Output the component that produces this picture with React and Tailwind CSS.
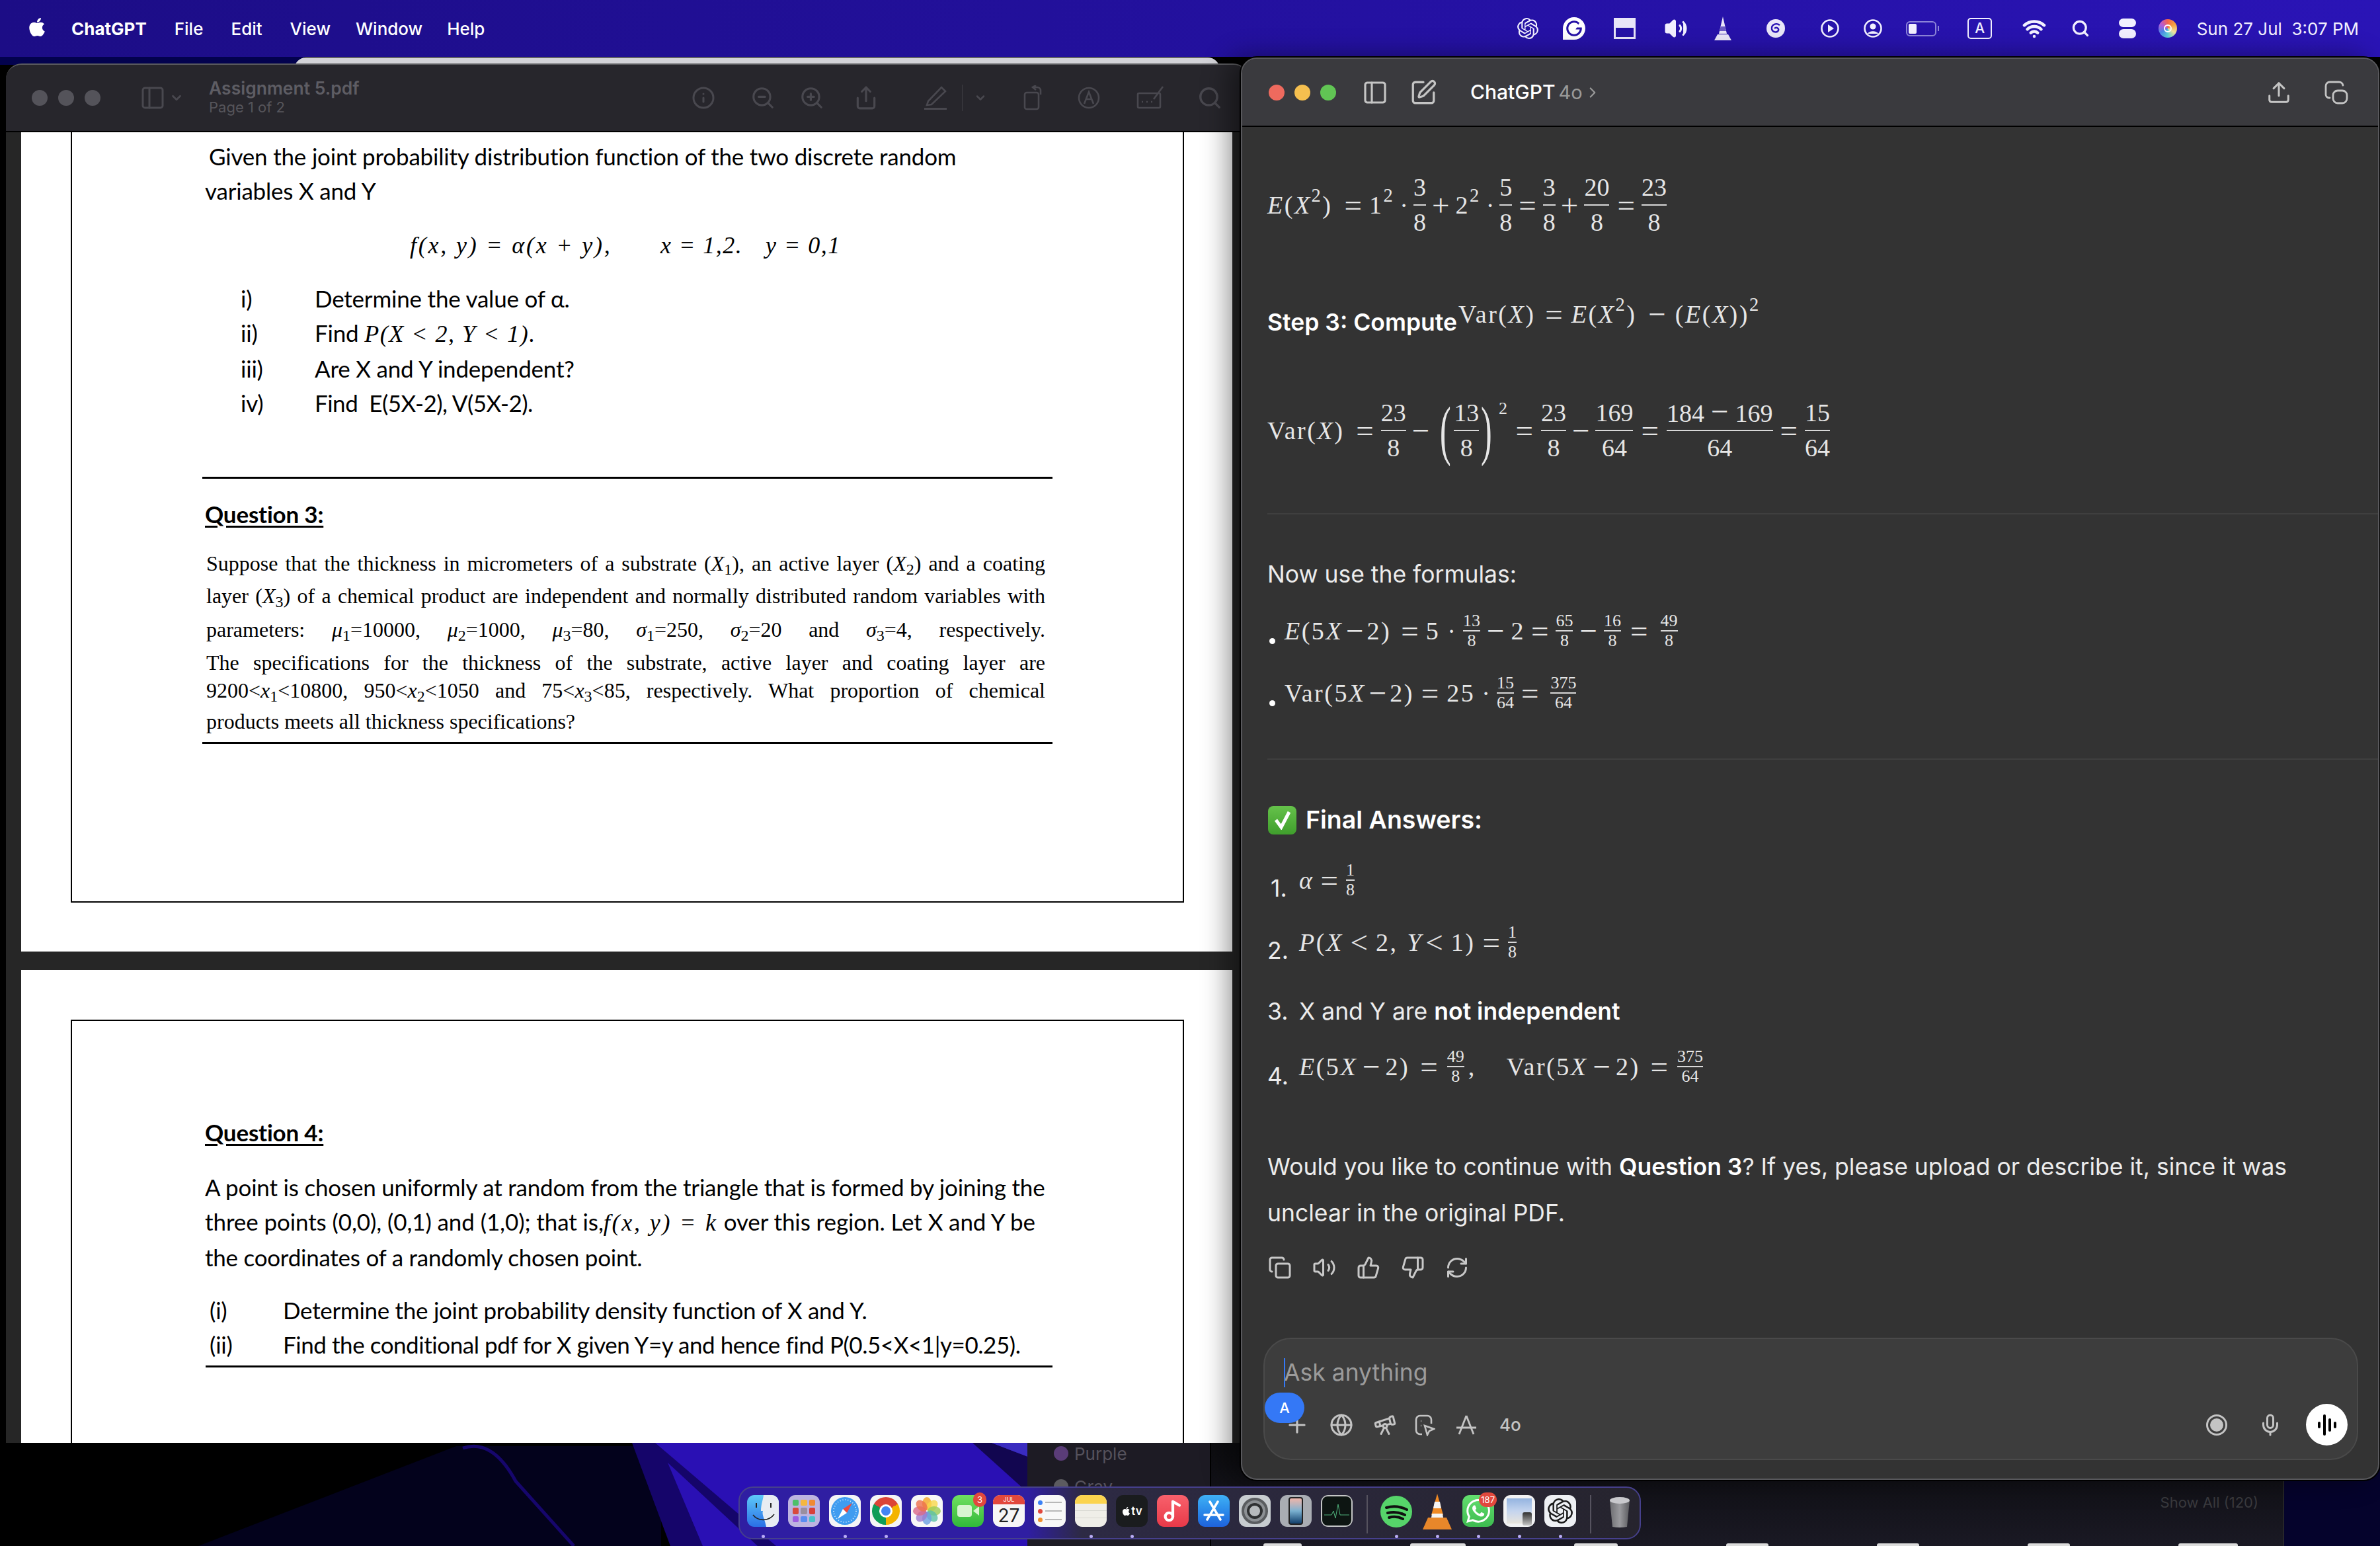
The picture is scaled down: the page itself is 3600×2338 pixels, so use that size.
import {
  Info, ZoomOut, ZoomIn, Share, ChevronDown, ChevronRight, Search, Copy, ThumbsUp, ThumbsDown, RefreshCw,
  Volume2, Plus, Globe, Telescope, Mic, PanelLeft, SquarePen, Upload, Wifi, Music2,
} from "lucide-react";
import { FaApple } from "react-icons/fa";
import { SiOpenai, SiWhatsapp, SiGrammarly } from "react-icons/si";

// --- math helpers ---
const Frac = ({ n, d }) => (
  <span className="inline-flex flex-col items-center tracking-normal">
    <span className="h-[51px] leading-[51px]">{n}</span>
    <span className="h-[2px] w-full bg-[#d8d8d8]" />
    <span className="h-[51px] leading-[51px]">{d}</span>
  </span>
);

const SmallFrac = ({ n, d }) => (
  <span className="inline-flex flex-col items-center text-[26px] tracking-normal">
    <span className="h-[28px] leading-[28px]">{n}</span>
    <span className="h-[2px] w-full bg-[#d8d8d8]" />
    <span className="h-[28px] leading-[28px]">{d}</span>
  </span>
);

// operators in the reference's math font run wider than Liberation Serif
const Sym = ({ m = "mx-[10px]", children }) => <span className={`text-[47px] leading-none font-light tracking-normal ${m}`}>{children}</span>;
const Dot = ({ m = "mx-[8px]" }) => <span className={`tracking-normal ${m}`}>·</span>;

const MathRow = ({ className = "", children }) => (
  <div className={`flex items-center whitespace-pre font-['Liberation_Serif',serif] text-[38px] tracking-[2.5px] text-[#e6e6e6] ${className}`}>
    {children}
  </div>
);

// --- menu bar glyphs ---
const VlcGlyph = () => (
  <svg width="28" height="36" viewBox="0 0 28 36" className="shrink-0">
    <path d="M14 0 L20 26 H8 Z" fill="#e9e6f8" />
    <path d="M10.5 15 H17.5 L19 22 H9 Z" fill="#6a5ac4" />
    <path d="M6 27 H22 L27 36 H1 Z" fill="#e9e6f8" />
  </svg>
);

const SwirlGlyph = () => (
  <svg width="30" height="30" viewBox="0 0 30 30" className="shrink-0">
    <circle cx="15" cy="15" r="14" fill="#e9e6f8" />
    <path d="M21 10c-5-4-13-1-12 6 1 5 8 6 10 2 1-3-3-6-6-3" fill="none" stroke="#2a14b4" strokeWidth="2.4" />
  </svg>
);

const RingGlyph = ({ children }) => (
  <svg width="30" height="30" viewBox="0 0 30 30" className="shrink-0">
    <circle cx="15" cy="15" r="12.5" fill="none" stroke="#f2f0ff" strokeWidth="2.6" />
    {children}
  </svg>
);

const Slot = ({ m, children }) => <span className={`w-0 flex justify-center ${m}`}>{children}</span>;

const MenuIcons = () => (
  <div className="flex items-center text-[#f2f0ff]">
    <Slot m="ml-[0px]"><SiOpenai size={32} className="shrink-0" /></Slot>
    <Slot m="ml-[70px]"><SiGrammarly size={34} color="#fff" className="shrink-0" /></Slot>
    <Slot m="ml-[77px]">
      <span className="w-[33px] h-[32px] shrink-0 border-[3px] border-[#e9e6f8] flex flex-col">
        <span className="h-[12px] bg-[#e9e6f8]" />
      </span>
    </Slot>
    <Slot m="ml-[77px]"><Volume2 size={36} fill="#f2f0ff" className="shrink-0" /></Slot>
    <Slot m="ml-[71px]"><VlcGlyph /></Slot>
    <Slot m="ml-[80px]"><SwirlGlyph /></Slot>
    <Slot m="ml-[82px]">
      <RingGlyph><path d="M12 9 L21 15 L12 21 Z" fill="#f2f0ff" /></RingGlyph>
    </Slot>
    <Slot m="ml-[65px]">
      <RingGlyph>
        <circle cx="15" cy="12" r="4.5" fill="#f2f0ff" />
        <path d="M7 23c2-5 14-5 16 0" fill="#f2f0ff" />
      </RingGlyph>
    </Slot>
    <Slot m="ml-[75px]">
      <span className="flex items-center shrink-0">
        <span className="w-[46px] h-[23px] rounded-[6px] border-[2px] border-[#8c84d8] p-[2px]">
          <span className="block h-full w-[12px] rounded-[2px] bg-[#f2f0ff]" />
        </span>
        <span className="w-[2px] h-[8px] ml-[2px] bg-[#8c84d8]" />
      </span>
    </Slot>
    <Slot m="ml-[87px]">
      <span className="w-[37px] h-[32px] shrink-0 border-[2.5px] border-[#f2f0ff] rounded-[5px] flex items-center justify-center font-['Inter',sans-serif] text-[21px] font-medium">A</span>
    </Slot>
    <Slot m="ml-[82px]"><Wifi size={36} strokeWidth={3} className="shrink-0" /></Slot>
    <Slot m="ml-[70px]"><Search size={28} strokeWidth={2.8} className="shrink-0" /></Slot>
    <Slot m="ml-[71px]">
      <span className="flex flex-col gap-[3px] shrink-0">
        <span className="w-[26px] h-[13px] rounded-full border-[2px] border-[#f2f0ff] bg-[#f2f0ff]" />
        <span className="w-[26px] h-[14px] rounded-full bg-[#f2f0ff]" />
      </span>
    </Slot>
    <Slot m="ml-[61px]">
      <span className="w-[28px] h-[28px] shrink-0 rounded-full bg-[conic-gradient(#f6644c,#f4a340,#f4e3a0,#5ad0d8,#4b86e8,#b45ad8,#f6644c)] flex items-center justify-center">
        <span className="w-[12px] h-[12px] rounded-full border-[2px] border-white" />
      </span>
    </Slot>
  </div>
);

// --- dock icons ---
const Tile = ({ className = "", children }) => (
  <div className={`w-[48px] h-[48px] rounded-[11px] overflow-hidden ${className}`}>{children}</div>
);

const Finder = () => (
  <svg width="48" height="48" viewBox="0 0 48 48" className="rounded-[11px]">
    <defs>
      <linearGradient id="fb" x1="0" y1="0" x2="0" y2="1">
        <stop offset="0" stopColor="#5ec9f8" />
        <stop offset="1" stopColor="#2a6fe6" />
      </linearGradient>
    </defs>
    <rect width="48" height="48" fill="url(#fb)" />
    <path d="M25 0 H48 V48 H29 C27 36 22 30 24 24 H21 C21 14 24 8 25 0Z" fill="#e8ecf2" />
    <path d="M14 12v7M36 12v7" stroke="#222" strokeWidth="2" />
    <path d="M9 30c8 10 24 10 32-1" stroke="#222" strokeWidth="1.6" fill="none" />
  </svg>
);

const Launchpad = () => {
  const colors = ["#4ec06a", "#f5b740", "#f08a34", "#d84a3c", "#9a8fa0", "#d8403a", "#9b5ce0", "#5a8cf0", "#4ac0c8"];
  return (
    <Tile className="bg-[#bdb4e0] grid grid-cols-3 gap-[3px] p-[7px]">
      {colors.map((c) => (
        <span key={c} className="rounded-[2px]" style={{ background: c }} />
      ))}
    </Tile>
  );
};

const Safari = () => (
  <Tile className="bg-[#f4f4f6] flex items-center justify-center">
    <svg width="44" height="44" viewBox="0 0 44 44">
      <circle cx="22" cy="22" r="21" fill="#3f9cf0" />
      <circle cx="22" cy="22" r="17" fill="none" stroke="#d4ebfb" strokeWidth="2" strokeDasharray="1 3" />
      <path d="M33 10 L25 25 L19 19 Z" fill="#f04a3c" />
      <path d="M11 34 L19 19 L25 25 Z" fill="#fff" />
    </svg>
  </Tile>
);

const Chrome = () => (
  <Tile className="bg-[#f4f4f6] flex items-center justify-center">
    <span className="w-[42px] h-[42px] rounded-full bg-[conic-gradient(from_300deg,#dc4437_0_120deg,#f4b400_120deg_240deg,#0f9d58_240deg_360deg)] flex items-center justify-center">
      <span className="w-[20px] h-[20px] rounded-full bg-[#4285f4] border-[3px] border-white" />
    </span>
  </Tile>
);

const Photos = () => (
  <Tile className="bg-[#f7f7f7]">
    <svg width="48" height="48" viewBox="0 0 48 48">
      {[["#f5a623", 0], ["#f7d74a", 45], ["#9acb55", 90], ["#5cc1a6", 135], ["#6c9fe0", 180], ["#9c7bd0", 225], ["#d9688a", 270], ["#ee6f4c", 315]].map(([c, a]) => (
        <ellipse key={a} cx="24" cy="13" rx="7" ry="10" fill={c} opacity="0.8" transform={`rotate(${a} 24 24)`} />
      ))}
    </svg>
  </Tile>
);

const FaceTime = () => (
  <Tile className="bg-gradient-to-b from-[#6fe060] to-[#2fb93a] flex items-center justify-center gap-[2px]">
    <span className="w-[22px] h-[18px] rounded-[4px] bg-[#d8f5d0]" />
    <span className="w-0 h-0 border-y-[7px] border-y-transparent border-r-[9px] border-r-[#d8f5d0]" />
  </Tile>
);

const Calendar = () => (
  <Tile className="bg-[#f6f6f6] flex flex-col items-center font-['Inter',sans-serif]">
    <span className="w-full h-[14px] bg-[#e2483d] text-white text-[9px] leading-[14px] text-center">JUL</span>
    <span className="text-[#222] text-[28px] leading-[34px]">27</span>
  </Tile>
);

const Reminders = () => (
  <Tile className="bg-[#f8f8f8] flex flex-col justify-center gap-[6px] px-[6px]">
    {["#3b82f6", "#e2483d", "#f0902f"].map((c) => (
      <span key={c} className="flex items-center gap-[4px]">
        <span className="w-[7px] h-[7px] rounded-full" style={{ background: c }} />
        <span className="flex-1 h-[2px] bg-[#b8b8b8]" />
      </span>
    ))}
  </Tile>
);

const Notes = () => (
  <Tile className="bg-[#efeee8] flex flex-col">
    <span className="h-[13px] bg-[#fbd44e]" />
    <span className="h-[1px] mt-[10px] bg-[#d8d8d2]" />
    <span className="h-[1px] mt-[10px] bg-[#d8d8d2]" />
  </Tile>
);

const Tv = () => (
  <Tile className="bg-[#1a1c1e] flex items-center justify-center text-white">
    <FaApple size={15} />
    <span className="font-['Inter',sans-serif] text-[17px] font-semibold leading-none">tv</span>
  </Tile>
);

const MusicApp = () => (
  <Tile className="bg-gradient-to-b from-[#f8606c] to-[#e83848] flex items-center justify-center">
    <Music2 size={34} color="#fff" strokeWidth={3} />
  </Tile>
);

const AppStore = () => (
  <Tile className="bg-gradient-to-b from-[#3fb0f5] to-[#1f62dc]">
    <svg width="48" height="48" viewBox="0 0 48 48" stroke="#fff" strokeWidth="3.5" strokeLinecap="round">
      <path d="M18 10 L34 37M30 10 L14 37M10 30 H38" />
    </svg>
  </Tile>
);

const SettingsApp = () => (
  <Tile className="bg-[#c7ccd0] flex items-center justify-center">
    <span className="w-[40px] h-[40px] rounded-full border-[4px] border-[#5a5d60] flex items-center justify-center bg-[#8c9094]">
      <span className="w-[24px] h-[24px] rounded-full border-[4px] border-[#2e3032] bg-[#b6babd]" />
    </span>
  </Tile>
);

const Mirroring = () => (
  <Tile className="bg-[#a9adb3] flex items-center justify-center">
    <span className="w-[22px] h-[42px] rounded-[4px] border-[2px] border-[#222] bg-gradient-to-b from-[#eeb4a8] via-[#7ab0d0] to-[#11406c]" />
  </Tile>
);

const Activity = () => (
  <Tile className="bg-[#c4c6c6] p-[2px]">
    <span className="block w-full h-full rounded-[8px] bg-[#0d1512]">
      <svg width="44" height="44" viewBox="0 0 44 44">
        <path d="M3 28 H14 L17 22 L20 33 L24 12 L27 28 H41" fill="none" stroke="#4fb07a" strokeWidth="1" />
      </svg>
    </span>
  </Tile>
);

const Spotify = () => (
  <svg width="48" height="50" viewBox="0 0 48 50">
    <circle cx="24" cy="25" r="24" fill="#56d46a" />
    <path d="M9 19c10-3 21-2 31 3M11 27c9-2 18-1 26 3M13 34c7-2 15-1 21 2" fill="none" stroke="#101010" strokeWidth="4" strokeLinecap="round" />
  </svg>
);

const Vlc = () => (
  <svg width="48" height="54" viewBox="0 0 48 54" className="-mt-[2px]">
    <path d="M24 0 L33 32 H15 Z" fill="#f08a24" />
    <path d="M20 12 H28 L30 22 H18 Z" fill="#f4f4f4" />
    <path d="M16 30 H32 L33 36 H15 Z" fill="#f4f4f4" />
    <path d="M10 36 H38 L46 54 H2 Z" fill="#e8872a" />
  </svg>
);

const WhatsApp = () => (
  <Tile className="bg-gradient-to-b from-[#63df6f] to-[#3dbb50] flex items-center justify-center">
    <SiWhatsapp size={36} color="#fff" />
  </Tile>
);

const PreviewApp = () => (
  <Tile className="relative bg-[#f2f2f4] p-[5px]">
    <span className="block w-full h-full bg-gradient-to-b from-[#94b4e0] via-[#c4d4ee] to-[#e8e4dc]" />
    <span className="absolute right-[5px] bottom-[2px] w-[14px] h-[20px] rounded-[3px] bg-gradient-to-b from-[#333] to-[#c8c8c8]" />
  </Tile>
);

const ChatGptApp = () => (
  <Tile className="bg-[#eef0f4] flex items-center justify-center">
    <SiOpenai size={38} color="#1a1a1a" />
  </Tile>
);

const Trash = () => (
  <svg width="40" height="50" viewBox="0 0 40 50" className="mx-auto">
    <defs>
      <linearGradient id="tr" x1="0" y1="0" x2="1" y2="0">
        <stop offset="0" stopColor="#6e6e72" />
        <stop offset="0.5" stopColor="#9a9a9e" />
        <stop offset="1" stopColor="#5a5a5e" />
      </linearGradient>
    </defs>
    <path d="M5 8 H35 L31 48 Q20 50 9 48 Z" fill="url(#tr)" />
    <ellipse cx="20" cy="8" rx="15" ry="5" fill="#c8c8cc" />
  </svg>
);

const Badge = ({ children }) => (
  <span className="absolute -top-[4px] -right-[4px] h-[22px] min-w-[20px] px-[3px] rounded-full bg-[#e2483d] text-white text-[13px] leading-[22px] text-center font-['Inter',sans-serif]">
    {children}
  </span>
);

const DockItem = ({ running, badge, children }) => (
  <div className="relative w-[48px] h-[66px] shrink-0 flex flex-col items-center">
    <div className="h-[50px]">{children}</div>
    {badge && <Badge>{badge}</Badge>}
    {running && <span className="w-[5px] h-[5px] mt-[10px] rounded-full bg-[#b9acf5]" />}
  </div>
);

const Dock = () => (
  <div className="absolute left-[1117px] top-[2248px] w-[1365px] h-[80px] rounded-[22px] border-[2px] border-[#46408c] bg-[linear-gradient(90deg,#2f1ea2_0%,#2f1ea2_32%,#2d2a44_38%,#26242e_100%)] flex items-start gap-[14px] pl-[11px] pt-[11px]">
    <DockItem running><Finder /></DockItem>
    <DockItem><Launchpad /></DockItem>
    <DockItem running><Safari /></DockItem>
    <DockItem running><Chrome /></DockItem>
    <DockItem><Photos /></DockItem>
    <DockItem badge="3"><FaceTime /></DockItem>
    <DockItem><Calendar /></DockItem>
    <DockItem><Reminders /></DockItem>
    <DockItem running><Notes /></DockItem>
    <DockItem running><Tv /></DockItem>
    <DockItem><MusicApp /></DockItem>
    <DockItem><AppStore /></DockItem>
    <DockItem><SettingsApp /></DockItem>
    <DockItem><Mirroring /></DockItem>
    <DockItem><Activity /></DockItem>
    <span className="w-[2px] h-[58px] ml-[7px] mr-[5px] bg-[#55525e]" />
    <DockItem running><Spotify /></DockItem>
    <DockItem running><Vlc /></DockItem>
    <DockItem running badge="187"><WhatsApp /></DockItem>
    <DockItem running><PreviewApp /></DockItem>
    <DockItem running><ChatGptApp /></DockItem>
    <span className="w-[2px] h-[58px] ml-[7px] mr-[5px] bg-[#55525e]" />
    <DockItem><Trash /></DockItem>
  </div>
);

// --- preview window ---
const FormIcon = () => (
  <svg width="42" height="38" viewBox="0 0 42 38" fill="none" stroke="#49484f" strokeWidth="2.6">
    <rect x="2" y="12" width="34" height="22" rx="2" />
    <path d="M8 25h2M15 25h2M22 25h2M26 21 L40 2" />
  </svg>
);

const MarkupIcon = () => (
  <svg width="34" height="34" viewBox="0 0 34 34" fill="none" stroke="#49484f" strokeWidth="2.6">
    <circle cx="17" cy="17" r="15" />
    <path d="M10 26 L17 8 L24 26M13 19 H21" />
  </svg>
);

const RotateIcon = () => (
  <svg width="36" height="38" viewBox="0 0 36 38" fill="none" stroke="#49484f" strokeWidth="2.6">
    <rect x="2" y="11" width="21" height="25" rx="3" />
    <path d="M26 14 V8 a5 5 0 0 0 -5 -5 H15 M19 0 L14 3 L19 7" />
  </svg>
);

const PreviewBar = () => {
  const ic = "text-[#49484f]";
  return (
    <div className="h-[102px] shrink-0 bg-[#27262c] border-b-[2px] border-black flex items-center pl-[39px]">
      <div className="flex gap-[16px]">
        <span className="w-[24px] h-[24px] rounded-full bg-[#54535a]" />
        <span className="w-[24px] h-[24px] rounded-full bg-[#54535a]" />
        <span className="w-[24px] h-[24px] rounded-full bg-[#54535a]" />
      </div>
      <PanelLeft size={40} strokeWidth={1.8} className={`${ic} ml-[59px]`} />
      <ChevronDown size={22} strokeWidth={3} className={`${ic} ml-[5px]`} />
      <div className="ml-[38px] w-[700px] font-['Inter',sans-serif] -mt-[4px]">
        <div className="text-[26.5px] leading-[32px] font-semibold text-[#5e5d64]">Assignment 5.pdf</div>
        <div className="text-[22px] leading-[26px] text-[#56555b]">Page 1 of 2</div>
      </div>
      <Info size={36} strokeWidth={2} className={`${ic} ml-[30px]`} />
      <ZoomOut size={38} strokeWidth={2} className={`${ic} ml-[53px]`} />
      <ZoomIn size={38} strokeWidth={2} className={`${ic} ml-[36px]`} />
      <Share size={38} strokeWidth={2} className={`${ic} ml-[44px]`} />
      <span className="relative w-[38px] h-[38px] ml-[67px] flex flex-col items-center">
        <svg width="34" height="32" viewBox="0 0 34 32" fill="none" stroke="#49484f" strokeWidth="2.6">
          <path d="M6 24 L26 3 L32 9 L11 29 L4 30 Z" />
        </svg>
        <span className="w-[34px] h-[3px] bg-[#49484f] mt-[2px]" />
      </span>
      <span className="w-[1px] h-[40px] ml-[21px] bg-[#3d3c43]" />
      <ChevronDown size={20} strokeWidth={3} className={`${ic} ml-[17px]`} />
      <span className="ml-[55px]"><RotateIcon /></span>
      <span className="ml-[46px]"><MarkupIcon /></span>
      <span className="ml-[55px]"><FormIcon /></span>
      <Search size={38} strokeWidth={2.2} className={`${ic} ml-[50px]`} />
    </div>
  );
};

const calibri = "font-['Lato',sans-serif] text-[35px] leading-[52px] tracking-[-0.2px] text-black whitespace-pre";
const cambria = "font-['Liberation_Serif',serif] italic text-[36px]";
const times = "font-['Liberation_Serif',serif] text-[32px] text-black whitespace-nowrap";

const QItem = ({ n, children }) => (
  <div className={`flex ${calibri}`}>
    <span className="w-[112px]">{n}</span>
    <span>{children}</span>
  </div>
);

const Page1 = () => (
  <div className="bg-white h-[1239px] pl-[75px] shrink-0">
    <div className="w-[1684px] h-[1165px] border-x-[2px] border-b-[2px] border-black pl-[201px] pt-[10px]">
      <div className={`${calibri} ml-[6px]`}>Given the joint probability distribution function of the two discrete random</div>
      <div className={calibri}>variables X and Y</div>
      <div className={`${calibri} mt-[31px] ml-[310px] flex`}>
        <span className={`${cambria} tracking-[2.8px] w-[379px]`}>f(x, y) = α(x + y),</span>
        <span className={`${cambria} tracking-[1.5px] w-[159px]`}>x = 1,2.</span>
        <span className={`${cambria} tracking-[1.5px]`}>y = 0,1</span>
      </div>
      <div className="mt-[28px] ml-[54px]">
        <QItem n="i)">Determine the value of α.</QItem>
        <QItem n="ii)">Find <span className={`${cambria} tracking-[1.5px]`}>P(X &lt; 2, Y &lt; 1).</span></QItem>
        <QItem n="iii)">Are X and Y independent?</QItem>
        <QItem n="iv)"><span className="tracking-[-0.5px]">Find  E(5X-2), V(5X-2).</span></QItem>
      </div>
      <div className="mt-[86px] -ml-[4px] w-[1286px] h-[3px] bg-black" />
      <div className={`${calibri} mt-[27px] font-bold underline underline-offset-[4px]`}>Question 3:</div>
      <div className="mt-[25px] w-[1269px] ml-[2px]">
        <div className={`${times} h-[49px] leading-[48px] [text-align-last:justify]`}>
          Suppose that the thickness in micrometers of a substrate (<i>X</i><sub>1</sub>), an active layer (<i>X</i><sub>2</sub>) and a coating
        </div>
        <div className={`${times} h-[51px] leading-[48px] [text-align-last:justify]`}>
          layer (<i>X</i><sub>3</sub>) of a chemical product are independent and normally distributed random variables with
        </div>
        <div className={`${times} h-[50px] leading-[48px] [text-align-last:justify]`}>
          parameters: <i>μ</i><sub>1</sub>=10000, <i>μ</i><sub>2</sub>=1000, <i>μ</i><sub>3</sub>=80, <i>σ</i><sub>1</sub>=250, <i>σ</i><sub>2</sub>=20 and <i>σ</i><sub>3</sub>=4, respectively.
        </div>
        <div className={`${times} h-[42px] leading-[48px] [text-align-last:justify]`}>
          The specifications for the thickness of the substrate, active layer and coating layer are
        </div>
        <div className={`${times} h-[47px] leading-[48px] [text-align-last:justify]`}>
          9200&lt;<i>x</i><sub>1</sub>&lt;10800, 950&lt;<i>x</i><sub>2</sub>&lt;1050 and 75&lt;<i>x</i><sub>3</sub>&lt;85, respectively. What proportion of chemical
        </div>
        <div className={`${times} h-[48px] leading-[48px]`}>products meets all thickness specifications?</div>
      </div>
      <div className="mt-[7px] -ml-[4px] w-[1286px] h-[3px] bg-black" />
    </div>
  </div>
);

const Page2 = () => (
  <div className="bg-white flex-1 pl-[75px] pt-[75px]">
    <div className="w-[1684px] h-[700px] border-x-[2px] border-t-[2px] border-black pl-[201px]">
      <div className={`${calibri} mt-[142px] font-bold underline underline-offset-[4px]`}>Question 4:</div>
      <div className="mt-[31px]">
        <div className={calibri}>A point is chosen uniformly at random from the triangle that is formed by joining the</div>
        <div className={calibri}>
          <span className="tracking-[-0.1px]">three points (0,0), (0,1) and (1,0); that is,</span><span className={`${cambria} tracking-[2.8px]`}>f(x, y) = k</span><span className="tracking-[-0.1px]"> over this region. Let X and Y be</span>
        </div>
        <div className={calibri}><span className="tracking-[-0.25px]">the coordinates of a randomly chosen point.</span></div>
      </div>
      <div className="mt-[28px] ml-[7px]">
        <div className={`flex ${calibri}`}><span className="w-[111px]">(i)</span><span className="tracking-[-0.3px]">Determine the joint probability density function of X and Y.</span></div>
        <div className={`flex ${calibri}`}><span className="w-[111px]">(ii)</span><span className="tracking-[-0.45px]">Find the conditional pdf for X given Y=y and hence find P(0.5&lt;X&lt;1|y=0.25).</span></div>
      </div>
      <div className="mt-[6px] ml-[1px] w-[1281px] h-[3px] bg-black" />
    </div>
  </div>
);

// --- chat window ---
const NewWindowIcon = () => (
  <svg width="38" height="38" viewBox="0 0 38 38" fill="none" stroke="#c4c4c4" strokeWidth="2.8" strokeLinecap="round">
    <path d="M9 27 H8 a5 5 0 0 1 -5 -5 V9 a6 6 0 0 1 6 -6 H23 a6 6 0 0 1 6 5" />
    <rect x="14" y="16" width="21" height="19" rx="7" />
  </svg>
);

const ChatBar = () => (
  <div className="h-[103px] shrink-0 bg-[#3a3a3e] border-b-[2px] border-black flex items-center pl-[40px] pr-[44px] font-['Inter',sans-serif]">
    <span className="w-[24px] h-[24px] rounded-full bg-[#ee6a5e]" />
    <span className="w-[24px] h-[24px] rounded-full bg-[#f5bf4f] ml-[15px]" />
    <span className="w-[24px] h-[24px] rounded-full bg-[#61c554] ml-[15px]" />
    <PanelLeft size={40} strokeWidth={1.9} color="#c4c4c4" className="ml-[39px]" />
    <SquarePen size={42} strokeWidth={1.9} color="#c4c4c4" className="ml-[32px]" />
    <span className="ml-[50px] text-[30px] font-medium text-white">ChatGPT</span>
    <span className="ml-[5px] text-[29px] text-[#9a9a9a]">4o</span>
    <ChevronRight size={26} strokeWidth={2} color="#9a9a9a" className="ml-[2px]" />
    <span className="flex-1" />
    <Upload size={38} strokeWidth={1.9} color="#c4c4c4" />
    <span className="ml-[49px]"><NewWindowIcon /></span>
  </div>
);

const Hr = ({ className }) => <div className={`h-[2px] bg-[#3f3f3f] ${className}`} />;

const Bullet = () => <span className="w-[9px] h-[9px] ml-[3px] mr-[14px] mt-[30px] rounded-full bg-white shrink-0" />;

const Num = ({ className = "", children }) => <span className={`w-[48px] shrink-0 ${className}`}>{children}</span>;

const ChatBody = () => (
  <div className="flex-1 min-h-0 pl-[38px] font-['Inter',sans-serif] text-[35.5px] text-[#ececec]">
    <MathRow className="mt-[63px] h-[110px]">
      <i>E</i>(<i>X</i><sup>2</sup>)<Sym m="ml-[18px] mr-[11px]">=</Sym>1<sup>2</sup><Dot />
      <Frac n="3" d="8" /><Sym m="mx-[9px]">+</Sym>2<sup>2</sup><Dot /><Frac n="5" d="8" /><Sym m="mx-[10px]">=</Sym>
      <Frac n="3" d="8" /><Sym m="ml-[8px] mr-[9px]">+</Sym><Frac n="20" d="8" /><Sym m="ml-[12px] mr-[10px]">=</Sym><Frac n="23" d="8" />
    </MathRow>

    <div className="mt-[95px] h-[56px] flex items-center">
      <span className="font-semibold text-white">Step 3: Compute</span>
      <MathRow className="ml-[2px] mb-[26px]">
        Var(<i>X</i>)<Sym m="ml-[15px] mr-[13px]">=</Sym><i>E</i>(<i>X</i><sup>2</sup>)<Sym m="ml-[18px] mr-[14px]">−</Sym>(<i>E</i>(<i>X</i>))<sup>2</sup>
      </MathRow>
    </div>

    <MathRow className="mt-[80px] h-[110px]">
      Var(<i>X</i>)<Sym m="ml-[18px] mr-[11px]">=</Sym><Frac n="23" d="8" /><Sym m="ml-[9px] mr-[13px]">−</Sym>
      <span className="text-[100px] leading-none font-light scale-x-[0.5] -mx-[6px]">(</span>
      <Frac n="13" d="8" />
      <span className="text-[100px] leading-none font-light scale-x-[0.5] -mx-[6px]">)</span>
      <span className="text-[26px] self-start mt-[2px] ml-[6px]">2</span>
      <Sym m="ml-[10px] mr-[12px]">=</Sym><Frac n="23" d="8" /><Sym m="mx-[9px]">−</Sym><Frac n="169" d="64" /><Sym m="mx-[12px]">=</Sym>
      <Frac n={<>184<Sym m="mx-[10px]">−</Sym>169</>} d="64" /><Sym m="mx-[11px]">=</Sym><Frac n="15" d="64" />
    </MathRow>

    <Hr className="mt-[70px]" />

    <div className="mt-[66px] h-[50px] leading-[50px]">Now use the formulas:</div>

    <div className="mt-[28px] h-[64px] flex items-center">
      <Bullet />
      <MathRow>
        <i>E</i>(5<i>X</i><Sym m="mx-[5px]">−</Sym>2)<Sym m="ml-[15px] mr-[11px]">=</Sym>5<Dot m="mx-[11px]" /><SmallFrac n="13" d="8" /><Sym m="mx-[10px]">−</Sym>2<Sym m="ml-[9px] mr-[11px]">=</Sym>
        <SmallFrac n="65" d="8" /><Sym m="ml-[10px] mr-[10px]">−</Sym><SmallFrac n="16" d="8" /><Sym m="ml-[14px] mr-[19px]">=</Sym><SmallFrac n="49" d="8" />
      </MathRow>
    </div>
    <div className="mt-[30px] h-[64px] flex items-center">
      <Bullet />
      <MathRow>
        Var(5<i>X</i><Sym m="mx-[5px]">−</Sym>2)<Sym m="ml-[11px] mr-[12px]">=</Sym>25<Dot m="mx-[10px]" /><SmallFrac n="15" d="64" /><Sym m="ml-[11px] mr-[18px]">=</Sym><SmallFrac n="375" d="64" />
      </MathRow>
    </div>

    <Hr className="mt-[67px]" />

    <div className="mt-[63px] h-[56px] flex items-center">
      <span className="w-[43px] h-[43px] ml-[1px] rounded-[8px] bg-gradient-to-b from-[#65c24a] to-[#3f9e2c] flex items-center justify-center">
        <svg width="28" height="30" viewBox="0 0 28 30" fill="none" stroke="#fff" strokeWidth="5"><path d="M4 15 L12 26 L24 3" /></svg>
      </span>
      <span className="ml-[14px] text-[37.5px] font-semibold text-white">Final Answers:</span>
    </div>

    <div className="mt-[44px] h-[64px] flex items-center">
      <Num className="pl-[5px]">1.</Num>
      <MathRow className="mb-[26px]"><i>α</i><Sym m="ml-[10px] mr-[12px]">=</Sym><SmallFrac n="1" d="8" /></MathRow>
    </div>
    <div className="mt-[30px] h-[64px] flex items-center">
      <Num>2.</Num>
      <MathRow className="mb-[26px]">
        <i>P</i>(<i>X</i><Sym m="ml-[11px] mr-[12px]">&lt;</Sym>2,<span className="w-[14px]" /><i>Y</i><Sym m="ml-[4px] mr-[12px]">&lt;</Sym>1)<Sym m="ml-[11px] mr-[12px]">=</Sym><SmallFrac n="1" d="8" />
      </MathRow>
    </div>
    <div className="mt-[35px] h-[50px] flex items-center">
      <Num>3.</Num>
      <span>X and Y are <span className="font-semibold text-white">not independent</span></span>
    </div>
    <div className="mt-[41px] h-[64px] flex items-center">
      <Num>4.</Num>
      <MathRow className="mb-[30px]">
        <i>E</i>(5<i>X</i><Sym m="mx-[8px]">−</Sym>2)<Sym m="ml-[16px] mr-[14px]">=</Sym><SmallFrac n="49" d="8" /><span className="ml-[6px]">,</span><span className="w-[46px]" />
        Var(5<i>X</i><Sym m="mx-[8px]">−</Sym>2)<Sym m="ml-[16px] mr-[14px]">=</Sym><SmallFrac n="375" d="64" />
      </MathRow>
    </div>

    <div className="mt-[70px] leading-[70px]">
      <div>Would you like to continue with <span className="font-semibold text-white">Question 3</span>? If yes, please upload or describe it, since it was</div>
      <div>unclear in the original PDF.</div>
    </div>

    <div className="mt-[29px] flex items-center gap-[31px] text-[#c8c8c8] ml-[1px]">
      <Copy size={36} strokeWidth={2} />
      <Volume2 size={36} strokeWidth={2} />
      <ThumbsUp size={36} strokeWidth={2} />
      <ThumbsDown size={36} strokeWidth={2} />
      <RefreshCw size={36} strokeWidth={2} />
    </div>
  </div>
);

const CanvasIcon = () => (
  <svg width="32" height="34" viewBox="0 0 32 34" fill="none" stroke="#c4c4c4" strokeWidth="2.6">
    <path d="M12 31 H9 a6 6 0 0 1 -6 -6 V9 a6 6 0 0 1 6 -6 H20 a6 6 0 0 1 6 6 V15" />
    <path d="M16 18 L30 23 L23 26 L20 32 Z" />
    <path d="M10 11h1M10 18h1" />
  </svg>
);

const ToolsIcon = () => (
  <svg width="34" height="34" viewBox="0 0 34 34" fill="none" stroke="#c4c4c4" strokeWidth="2.8">
    <path d="M17 3 L6 31M17 3 L28 31M2 21 H32" />
  </svg>
);

const Composer = () => (
  <div className="relative ml-[32px] mr-[30px] mb-[28px] h-[185px] shrink-0 rounded-[42px] bg-[#3d3d3d] border-[2px] border-[#4a4a4a] font-['Inter',sans-serif]">
    <div className="flex items-center h-[48px] mt-[27px] pl-[29px]">
      <span className="w-[2px] h-[44px] -mr-[2px] bg-[#3478f6]" />
      <span className="text-[35.5px] text-[#9b9b9b]">Ask anything</span>
    </div>
    <span className="absolute left-[0px] top-[81px] w-[60px] h-[46px] rounded-full bg-[#3478f6] text-white text-[22px] font-medium flex items-center justify-center">A</span>
    <div className="flex items-center mt-[23px] pl-[30px] pr-[14px] text-[#c4c4c4]">
      <Plus size={38} strokeWidth={2} />
      <Globe size={36} strokeWidth={2} className="ml-[30px]" />
      <Telescope size={36} strokeWidth={2} className="ml-[30px]" />
      <span className="ml-[26px]"><CanvasIcon /></span>
      <span className="ml-[30px]"><ToolsIcon /></span>
      <span className="ml-[33px] text-[26px] font-medium">4o</span>
      <span className="flex-1" />
      <span className="w-[32px] h-[32px] rounded-full border-[3px] border-[#c4c4c4] p-[3px]">
        <span className="block w-full h-full rounded-full bg-[#c4c4c4]" />
      </span>
      <Mic size={36} strokeWidth={2} className="ml-[47px]" />
      <span className="ml-[36px] w-[63px] h-[63px] rounded-full bg-white flex items-center justify-center gap-[4px]">
        <span className="w-[4px] h-[10px] rounded-full bg-black" />
        <span className="w-[4px] h-[32px] rounded-full bg-black" />
        <span className="w-[4px] h-[20px] rounded-full bg-black" />
        <span className="w-[4px] h-[10px] rounded-full bg-black" />
      </span>
    </div>
  </div>
);

const Wallpaper = () => (
  <svg className="absolute inset-0" width="3600" height="2338" viewBox="0 0 3600 2338">
    <rect width="3600" height="2338" fill="#000" />
    <path d="M300 2338 L690 2187 L1000 2187 L1000 2338 Z" fill="#03021c" />
    <path d="M700 2190 Q745 2175 780 2240 L868 2338" fill="none" stroke="#16066c" strokeWidth="5" />
    <path d="M956 2182 H1560 V2338 H1014 Z" fill="#15056a" />
    <path d="M991 2182 H1560 V2338 H1174 Z" fill="#2a10b4" />
    <path d="M1010 2212 L1146 2338 H1063 Z" fill="#2a10b4" />
    <path d="M1471 2182 L1560 2262 V2205 L1500 2182 Z" fill="#120650" />
    <path d="M1500 2182 L1560 2205 V2182 Z" fill="#3a2cc0" />
    <rect y="86" width="460" height="12" fill="#03024e" />
    <rect x="3455" y="2182" width="145" height="156" fill="#05032c" />
  </svg>
);

const FinderBehind = () => (
  <div className="absolute left-[1554px] top-[2182px] w-[1901px] h-[156px] flex border-r-[1px] border-[#333] font-['Inter',sans-serif]">
    <div className="w-[278px] bg-[#1d1b24] border-r-[2px] border-black pl-[40px]">
      <div className="flex items-center mt-[1px] h-[30px] text-[26px] text-[#55525c]">
        <span className="w-[22px] h-[22px] rounded-full bg-[#5a3c78] mr-[9px]" />Purple
      </div>
      <div className="flex items-center mt-[20px] h-[30px] text-[26px] text-[#55525c]">
        <span className="w-[22px] h-[22px] rounded-full bg-[#5c5b60] mr-[9px]" />Gray
      </div>
    </div>
    <div className="flex-1 bg-gradient-to-b from-[#0c0c0f] to-[#1a1924] flex flex-col">
      <div className="mt-[74px] pr-[38px] text-right text-[22px] text-[#3a3a3e]">Show All (120)</div>
      <div className="mt-[auto] flex pl-[79px] gap-[164px]">
        <span className="w-[58px] h-[4px] bg-[#dcdcdc] rounded-t-[3px]" />
        <span className="w-[84px] h-[4px] bg-[#dcdcdc] rounded-t-[3px]" />
        <span className="w-[66px] h-[4px] bg-[#dcdcdc] rounded-t-[3px]" />
        <span className="w-[64px] h-[4px] bg-[#dcdcdc] rounded-t-[3px]" />
        <span className="w-[64px] h-[4px] bg-[#dcdcdc] rounded-t-[3px]" />
        <span className="w-[64px] h-[4px] bg-[#dcdcdc] rounded-t-[3px]" />
        <span className="w-[90px] h-[4px] bg-[#dcdcdc] rounded-t-[3px]" />
      </div>
    </div>
  </div>
);

export default function App() {
  return (
    <div className="relative w-[3600px] h-[2338px] overflow-hidden bg-black">
      <Wallpaper />
      <FinderBehind />

      {/* menu bar */}
      <div className="absolute inset-x-0 top-0 h-[86px] bg-gradient-to-r from-[#1c0d86] to-[#2a14b6] flex items-center pl-[40px] pr-[32px] font-['Inter',sans-serif] text-[26px] text-white">
        <FaApple size={32} className="-mt-[4px]" />
        <span className="ml-[36px] font-bold">ChatGPT</span>
        <span className="ml-[42px] font-medium">File</span>
        <span className="ml-[42px] font-medium">Edit</span>
        <span className="ml-[42px] font-medium">View</span>
        <span className="ml-[38px] font-medium">Window</span>
        <span className="ml-[37px] font-medium">Help</span>
        <span className="flex-1" />
        <MenuIcons />
        <span className="ml-[44px] text-[#f2f0ff] whitespace-pre">Sun 27 Jul  3:07 PM</span>
      </div>

      {/* window peeking behind the preview */}
      <div className="absolute left-[445px] top-[87px] w-[1400px] h-[20px] rounded-t-[18px] bg-[#d3d3d8]" />

      {/* preview window */}
      <div className="absolute left-[9px] top-[96px] w-[1880px] h-[2086px] rounded-t-[24px] overflow-hidden border-t-[2px] border-[#5a5a5e] bg-[#262626] flex flex-col">
        <PreviewBar />
        <div className="flex-1 min-h-0 flex flex-col gap-[28px] pl-[23px] pr-[25px]">
          <Page1 />
          <Page2 />
        </div>
      </div>

      {/* chatgpt window */}
      <div className="absolute left-[1877px] top-[87px] w-[1722px] h-[2151px] rounded-[24px] overflow-hidden border-[2px] border-[#58585c] bg-[#333333] shadow-[0_0_0_2px_#000,-18px_0_40px_rgba(0,0,0,0.45)] flex flex-col">
        <ChatBar />
        <ChatBody />
        <Composer />
      </div>

      <Dock />
    </div>
  );
}
